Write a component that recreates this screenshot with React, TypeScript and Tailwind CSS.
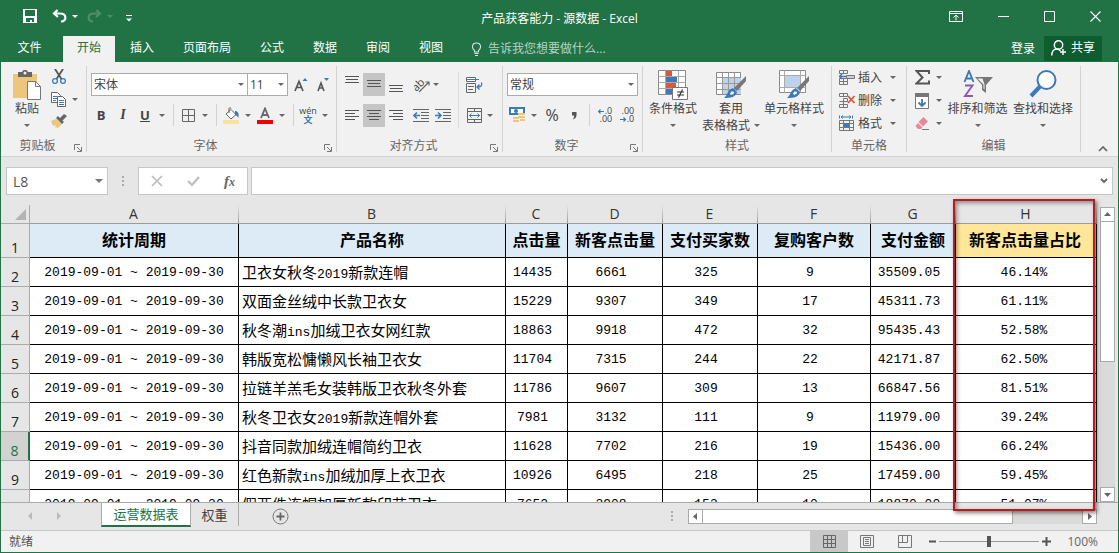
import type { ReactNode } from 'react'
import clsx from 'clsx'

const period = '2019-09-01 ~ 2019-09-30'

const rows = [
  [period, '卫衣女秋冬2019新款连帽', '14435', '6661', '325', '9', '35509.05', '46.14%'],
  [period, '双面金丝绒中长款卫衣女', '15229', '9307', '349', '17', '45311.73', '61.11%'],
  [period, '秋冬潮ins加绒卫衣女网红款', '18863', '9918', '472', '32', '95435.43', '52.58%'],
  [period, '韩版宽松慵懒风长袖卫衣女', '11704', '7315', '244', '22', '42171.87', '62.50%'],
  [period, '拉链羊羔毛女装韩版卫衣秋冬外套', '11786', '9607', '309', '13', '66847.56', '81.51%'],
  [period, '秋冬卫衣女2019新款连帽外套', '7981', '3132', '111', '9', '11979.00', '39.24%'],
  [period, '抖音同款加绒连帽简约卫衣', '11628', '7702', '216', '19', '15436.00', '66.24%'],
  [period, '红色新款ins加绒加厚上衣卫衣', '10926', '6495', '218', '25', '17459.00', '59.45%'],
  [period, '假两件连帽加厚新款印花卫衣', '7652', '3908', '153', '10', '18870.00', '51.07%'],
]

const headers = ['统计周期', '产品名称', '点击量', '新客点击量', '支付买家数', '复购客户数', '支付金额', '新客点击量占比']
const letters = ['A', 'B', 'C', 'D', 'E', 'F', 'G', 'H']
const tabs = ['文件', '开始', '插入', '页面布局', '公式', '数据', '审阅', '视图']

function Svg({ w, h, children, className }: { w: number; h: number; children: ReactNode; className?: string }) {
  return (
    <svg width={w} height={h} viewBox={`0 0 ${w} ${h}`} fill="none" className={clsx('shrink-0', className)} aria-hidden="true">
      {children}
    </svg>
  )
}

function Caret({ className = 'text-[#666]' }: { className?: string }) {
  return (
    <Svg w={6} h={3} className={className}>
      <path d="M0 0h6L3 3z" fill="currentColor" />
    </Svg>
  )
}

function CaretButton({ label }: { label: string }) {
  return (
    <button aria-label={label} className="flex w-[14px] items-center justify-center self-stretch">
      <Caret />
    </button>
  )
}

function Tool({ label, children, className = 'w-5' }: { label: string; children: ReactNode; className?: string }) {
  return (
    <button aria-label={label} className={clsx('flex shrink-0 items-center justify-center self-stretch', className)}>
      {children}
    </button>
  )
}

function Sep() {
  return <span className="mx-1 h-[22px] w-px shrink-0 bg-[#d2d2d2]" />
}

function Combo({ label, value, className }: { label: string; value: string; className?: string }) {
  return (
    <div className={clsx('relative h-[23px]', className)}>
      <select aria-label={label} className="h-full w-full appearance-none border border-[#ababab] bg-white pl-[2px] text-xs leading-[21px] text-[#444]">
        <option>{value}</option>
      </select>
      <span className="pointer-events-none absolute right-[4px] top-[10px]">
        <Caret />
      </span>
    </div>
  )
}

function Group({ title, width, launcher = true, children }: { title: string; width: string; launcher?: boolean; children: ReactNode }) {
  return (
    <section aria-label={title} className={clsx('flex h-[86px] shrink-0 flex-col border-r border-[#d2d2d2]', width)}>
      <div className="flex h-[73px]">{children}</div>
      <div className="flex h-[13px] items-center text-[#666]">
        <span className="flex-1 text-center">{title}</span>
        {launcher && (
          <button aria-label={`${title}设置`} className="mr-1 mt-1">
            <Svg w={8} h={8}>
              <path d="M.5 6V.5H6M3 3l4 4M7.5 3v4.500H3" stroke="#777" />
            </Svg>
          </button>
        )}
      </div>
    </section>
  )
}

function BigButton({ icon, lines, width }: { icon: ReactNode; lines: string[]; width: string }) {
  return (
    <button className={clsx('flex shrink-0 flex-col items-center pt-1', width)}>
      <span className="flex h-[32px] items-start">{icon}</span>
      <span className="h-4">{lines[0]}</span>
      <span className="flex h-[14px] items-center gap-1">
        {lines[1]}
        <Caret />
      </span>
    </button>
  )
}

function Lines({ widths, top, align = 'center' }: { widths: number[]; top: number; align?: 'left' | 'center' | 'right' }) {
  return (
    <Svg w={14} h={17}>
      {widths.map((w, i) => {
        const x = align === 'left' ? 0 : align === 'right' ? 14 - w : (14 - w) / 2
        return <rect key={i} x={x} y={top + i * 3} width={w} height="1" fill="#555" />
      })}
    </Svg>
  )
}

function Brush() {
  return (
    <>
      <path d="M30 6v5l-9 10-3-3z" fill="#777" />
      <path d="M17 18l4 4c-1 5-6 6-13 6 4-3 3-8 9-10z" fill="#3a7ab8" />
      <path d="M15 22c2-1 3 0 3 1-1 2-3 2-4 1z" fill="#fff" />
    </>
  )
}

function CellRow({ label, children }: { label: string; children: ReactNode }) {
  return (
    <button className="flex h-[23px] items-center pl-[7px]">
      <Svg w={16} h={17}>
        {children}
      </Svg>
      <span className="ml-[3px] mr-2">{label}</span>
      <Caret />
    </button>
  )
}

function TitleBar() {
  return (
    <div className="grid h-9 shrink-0 grid-cols-[1fr_auto_1fr] text-white">
      <div className="flex items-center pl-[22px] pb-1">
        <button aria-label="保存">
          <Svg w={14} h={14}>
            <path d="M0 0h14v14H0z" fill="#fff" />
            <path d="M2 1h10v6H2zM3 9h8v4H9v-2H7v2H3z" fill="#217346" />
          </Svg>
        </button>
        <button aria-label="撤消" className="ml-[15px]">
          <Svg w={15} h={14}>
            <path d="M5.500 1L2 4.500 6 8M2 4.500h6c7 0 7 8 1 8" stroke="#fff" strokeWidth="2.200" />
          </Svg>
        </button>
        <Caret className="ml-[5px] text-white" />
        <button aria-label="恢复" className="ml-[9px]">
          <Svg w={15} h={14}>
            <path d="M9.500 1L13 4.500 9 8M13 4.500H7c-7 0-7 8-1 8" stroke="#4d8f6b" strokeWidth="2.200" />
          </Svg>
        </button>
        <Caret className="ml-[5px] text-[#4d8f6b]" />
        <button aria-label="自定义快速访问工具栏" className="ml-[13px] mt-1">
          <Svg w={6} h={7}>
            <path d="M0 .5h6" stroke="#fff" />
            <path d="M0 3.500h6l-3 3z" fill="#fff" />
          </Svg>
        </button>
      </div>
      <h1 className="self-center pt-px text-xs">产品获客能力 - 源数据 - Excel</h1>
      <div className="flex items-center justify-end gap-[35px] pb-1 pr-[17px]">
        <button aria-label="功能区显示选项">
          <Svg w={14} h={11}>
            <path d="M.5.5h13v10H.5zM.5 2.500h13M7 9.500V4M4.500 6.500L7 4l2.500 2.500" stroke="#fff" />
          </Svg>
        </button>
        <button aria-label="最小化">
          <Svg w={11} h={11}>
            <path d="M0 5.500h11" stroke="#fff" />
          </Svg>
        </button>
        <button aria-label="最大化">
          <Svg w={11} h={11}>
            <path d="M.5.5h10v10H.5z" stroke="#fff" />
          </Svg>
        </button>
        <button aria-label="关闭">
          <Svg w={11} h={11}>
            <path d="M.5.500l10 10M10.500.5l-10 10" stroke="#fff" strokeWidth="1.100" />
          </Svg>
        </button>
      </div>
    </div>
  )
}

function RibbonTabs() {
  return (
    <div className="flex h-[26px] shrink-0 text-white">
      <nav className="flex gap-px">
        {tabs.map((tab, i) => (
          <button
            key={tab}
            className={clsx('h-full pb-[2px]', i === 0 ? 'w-[61px] pr-1' : 'px-[14px]', i === 1 && 'bg-[#f1f1f1] text-[#217346]')}
          >
            {tab}
          </button>
        ))}
      </nav>
      <label className="ml-[14px] flex flex-1 items-center gap-[6px]">
        <Svg w={11} h={14}>
          <path d="M3.500 10V8.500C.5 6.500.500 1 5.500 1s5 5.500 2 7.500V10zM3.500 11.500h4M4 13.500h3" stroke="#d5e7dc" strokeWidth="1.100" />
        </Svg>
        <input placeholder="告诉我您想要做什么..." className="h-5 w-40 bg-transparent leading-5 outline-none placeholder:text-[#b5d3c1]" />
      </label>
      <button className="px-[9px]">登录</button>
      <button className="mr-4 flex h-[25px] items-center gap-1 bg-[#0f5c2f] px-[7px] pb-px">
        <Svg w={16} h={16}>
          <circle cx="7.500" cy="5" r="4.200" stroke="#fff" strokeWidth="1.400" />
          <path d="M.8 15.500c0-4 2-6.500 5-6.500 2 0 3 1 3.500 2M12 9v6M9 12h6" stroke="#fff" strokeWidth="1.400" />
        </Svg>
        共享
      </button>
    </div>
  )
}

function Ribbon() {
  return (
    <div className="flex h-[95px] shrink-0 border-b border-[#d2d2d2] bg-[#f1f1f1] pt-1 leading-[13px]">
      <Group title="剪贴板" width="w-[86px]">
        <BigButton
          width="w-[50px] pl-[2px]"
          lines={['粘贴']}
          icon={
            <Svg w={28} h={30}>
              <path d="M0 4h24v24H0z" fill="#edc57b" />
              <path d="M5 2h4c1-3 5-3 6 0h4v5H5z" fill="#666" />
              <circle cx="12" cy="3" r="1.500" fill="#f1f1f1" />
              <path d="M14.500 11.500h8l5 5v13h-13z" fill="#fff" stroke="#777" />
              <path d="M22.500 11.500v5h5" stroke="#777" />
            </Svg>
          }
        />
        <div className="flex flex-col">
          <Tool label="剪切" className="h-[22px] w-4">
            <Svg w={14} h={16}>
              <path d="M3 0l6.500 10M11 0L4.500 10" stroke="#555" strokeWidth="1.800" />
              <circle cx="3" cy="12" r="2.400" stroke="#3a7ab8" strokeWidth="1.300" />
              <circle cx="11" cy="12" r="2.400" stroke="#3a7ab8" strokeWidth="1.300" />
            </Svg>
          </Tool>
          <div className="flex h-[22px] items-center">
            <Tool label="复制" className="w-4">
              <Svg w={16} h={15}>
                <path d="M.5.500h6l3 3v7h-9z" fill="#fff" stroke="#666" />
                <path d="M2 4.500h4M2 6.500h4M2 8.500h3" stroke="#3a7ab8" />
                <path d="M6.500 4.500h5l3 3v7h-8z" fill="#fff" stroke="#666" />
                <path d="M8 8.500h5M8 10.500h5M8 12.500h5" stroke="#3a7ab8" />
              </Svg>
            </Tool>
            <button aria-label="复制选项" className="ml-[5px]">
              <Caret />
            </button>
          </div>
          <Tool label="格式刷" className="h-[22px] w-4">
            <Svg w={16} h={14}>
              <path d="M0 7l5-2 6 5-4 4-3-1 1-2-3 1z" fill="#edc57b" />
              <path d="M5 4l2-2 6 6-2 2zM9 4l4-4 3 2-5 5z" fill="#666" />
            </Svg>
          </Tool>
        </div>
      </Group>

      <Group title="字体" width="w-[250px]">
        <div className="flex flex-col gap-2 pl-1 pt-[7px]">
          <div className="flex h-[23px]">
            <Combo label="字体" value="宋体" className="w-[157px]" />
            <Combo label="字号" value="11" className="-ml-px w-[41px]" />
            <Tool label="增大字号" className="ml-px w-6">
              <Svg w={14} h={16}>
                <path d="M1 14L5 4.500 9 14M2.500 10.500h5" stroke="#555" strokeWidth="1.700" />
                <path d="M8.500 4h5L11 1z" fill="#3a7ab8" />
              </Svg>
            </Tool>
            <Tool label="减小字号" className="w-5">
              <Svg w={12} h={16}>
                <path d="M1 14l3-8 3 8M2 11h4" stroke="#555" strokeWidth="1.600" />
                <path d="M7 1h5L9.500 4z" fill="#3a7ab8" />
              </Svg>
            </Tool>
          </div>
          <div className="flex h-[22px] items-center font-['Open_Sans','Noto_Sans_CJK_SC',sans-serif] text-[13px] text-[#444]">
            <Tool label="加粗">
              <b>B</b>
            </Tool>
            <Tool label="倾斜" className="w-6">
              <i className="font-['Liberation_Serif',serif] text-sm font-bold">I</i>
            </Tool>
            <Tool label="下划线">
              <b className="underline">U</b>
            </Tool>
            <CaretButton label="下划线选项" />
            <Sep />
            <Tool label="边框">
              <Svg w={13} h={13}>
                <path d="M.5.500h12v12H.5zM6.500.5v12M.5 6.500h12" stroke="#666" />
              </Svg>
            </Tool>
            <CaretButton label="边框选项" />
            <Sep />
            <Tool label="填充颜色">
              <Svg w={16} h={17}>
                <path d="M3 7l5-4.500 5 5-5 4.500z" fill="#fff" stroke="#666" />
                <path d="M6 6V1.500C6 .5 8 .5 8 1.500" stroke="#666" />
                <path d="M12 4c3 0 4 2 3.500 7-1-2-2-2.500-3.500-3z" fill="#3a7ab8" />
                <path d="M0 13h16v4H0z" fill="#fbe29b" />
              </Svg>
            </Tool>
            <CaretButton label="填充颜色选项" />
            <Tool label="字体颜色">
              <Svg w={16} h={17}>
                <path d="M4 11l4-9.500L12 11M5.500 8h5" stroke="#666" strokeWidth="1.800" />
                <path d="M0 13h16v4H0z" fill="#f00000" />
              </Svg>
            </Tool>
            <CaretButton label="字体颜色选项" />
            <Sep />
            <Tool label="拼音指南">
              <span className="flex flex-col items-center leading-[9px]">
                <span className="text-[9px]">wén</span>
                <span className="text-[9px] font-bold text-[#3a7ab8]">文</span>
              </span>
            </Tool>
            <CaretButton label="拼音选项" />
          </div>
        </div>
      </Group>

      <Group title="对齐方式" width="w-[166px]">
        <div className="flex flex-col gap-2 pl-1 pt-[7px]">
          <div className="flex h-[23px]">
            <Tool label="顶端对齐" className="w-[22px]"><Lines widths={[14, 12, 14]} top={0} /></Tool>
            <Tool label="垂直居中" className="w-[22px] bg-[#c5c5c5]"><Lines widths={[14, 12, 14]} top={4} /></Tool>
            <Tool label="底端对齐" className="w-[22px]"><Lines widths={[14, 12, 14]} top={9} /></Tool>
            <Tool label="方向" className="ml-1 w-[22px]">
              <Svg w={17} h={16}>
                <text x="-2" y="11" transform="rotate(-45 5 8)" fontSize="11" fontFamily="Open Sans" fill="#444">ab</text>
                <path d="M5 15L15 5M11.500 5H15v3.500" stroke="#666" strokeWidth="1.200" />
              </Svg>
            </Tool>
            <button aria-label="方向选项">
              <Caret />
            </button>
          </div>
          <div className="flex h-[23px]">
            <Tool label="左对齐" className="w-[22px]"><Lines widths={[14, 10, 14, 10]} top={3} align="left" /></Tool>
            <Tool label="居中" className="w-[22px] bg-[#c5c5c5]"><Lines widths={[14, 10, 14, 10]} top={3} /></Tool>
            <Tool label="右对齐" className="w-[22px]"><Lines widths={[14, 10, 14, 10]} top={3} align="right" /></Tool>
            <Tool label="减少缩进量" className="ml-[3px] w-[22px]">
              <Svg w={16} h={13}>
                <path d="M0 .5h16M8 3.500h8M8 6.500h8M8 9.500h8M0 12.500h16" stroke="#666" />
                <path d="M1 6.500h6M4 3.500l-3 3 3 3" stroke="#3a7ab8" strokeWidth="1.600" />
              </Svg>
            </Tool>
            <Tool label="增加缩进量" className="w-[22px]">
              <Svg w={16} h={13}>
                <path d="M0 .5h16M8 3.500h8M8 6.500h8M8 9.500h8M0 12.500h16" stroke="#666" />
                <path d="M0 6.500h6M3 3.500l3 3-3 3" stroke="#3a7ab8" strokeWidth="1.600" />
              </Svg>
            </Tool>
          </div>
        </div>
        <span className="ml-1 mt-[6px] h-[56px] w-px bg-[#dcdcdc]" />
        <div className="ml-1 flex flex-col gap-2 pt-[7px]">
          <Tool label="自动换行" className="h-[23px] w-[22px]">
            <Svg w={17} h={16}>
              <path d="M.5.500h9v4h-9z" fill="#fff" stroke="#666" />
              <path d="M0 2.500h13" stroke="#3a7ab8" />
              <path d="M.5 6.500h9v9h-9zM2 9.500h6M2 12.500h5" stroke="#666" />
              <path d="M15.500 5.500c1 4-1 4.500-4.500 4.500M13.500 7.500L11 10l2.500 2.500" stroke="#3a7ab8" strokeWidth="1.300" />
            </Svg>
          </Tool>
          <div className="flex h-[23px] items-center">
            <Tool label="合并后居中" className="w-[22px]">
              <Svg w={15} h={15}>
                <path d="M.5.500h14v14H.5zM.5 3.500h14M.5 11.500h14M7.500.5v3M7.500 11.500v3" stroke="#666" />
                <path d="M2 7.500h11M4.500 5.500l-2 2 2 2M10.500 5.500l2 2-2 2" stroke="#3a7ab8" />
              </Svg>
            </Tool>
            <button aria-label="合并选项" className="ml-[2px]">
              <Caret />
            </button>
          </div>
        </div>
      </Group>

      <Group title="数字" width="w-[140px]">
        <div className="flex flex-col gap-2 pl-1 pt-[7px]">
          <Combo label="数字格式" value="常规" className="w-[131px]" />
          <div className="flex h-[22px] items-center">
            <Tool label="会计数字格式">
              <Svg w={16} h={16}>
                <path d="M0 0h16v8H0z" fill="#3a7ab8" />
                <path d="M2 2h12v4H2z" fill="#fff" />
                <circle cx="7" cy="4" r="2" fill="#3a7ab8" />
                <path d="M9 6h7v2H9zM9 9h7v2H9zM4 10h6v2H4zM4 13h6v2H4zM11 12h5v2h-5z" fill="#edc57b" />
              </Svg>
            </Tool>
            <CaretButton label="会计格式选项" />
            <Tool label="百分比样式" className="w-[22px]">
              <span className="text-base text-[#444]">%</span>
            </Tool>
            <Tool label="千位分隔样式" className="w-[22px]">
              <Svg w={6} h={9}>
                <path d="M1 1h4.500v3.500Q5 8 1.500 8.500 3.500 7 3 4.500H1z" fill="#555" />
              </Svg>
            </Tool>
            <Sep />
            <Tool label="增加小数位数" className="w-[22px]">
              <span className="flex flex-col items-end text-[9px] leading-[8px] text-[#444]">
                <span className="flex items-center">
                  <Svg w={7} h={5}><path d="M0 2.500h6M2.500.500l-2 2 2 2" stroke="#3a7ab8" strokeWidth="1.200" /></Svg>.0
                </span>
                <span>.00</span>
              </span>
            </Tool>
            <Tool label="减少小数位数" className="w-[22px]">
              <span className="flex flex-col items-end text-[9px] leading-[8px] text-[#444]">
                <span>.00</span>
                <span className="flex items-center">
                  <Svg w={7} h={5}><path d="M0 2.500h6M3.500.500l2 2-2 2" stroke="#3a7ab8" strokeWidth="1.200" /></Svg>.0
                </span>
              </span>
            </Tool>
          </div>
        </div>
      </Group>

      <Group title="样式" width="w-[189px]" launcher={false}>
        <BigButton
          width="ml-[2px] w-14"
          lines={['条件格式']}
          icon={
            <Svg w={30} h={30}>
              <path d="M.5.500h27v24H.5z" fill="#fff" stroke="#8a8a8a" />
              <path d="M7.500.5v24M20.500.5v24M.5 6.500h27M.5 12.500h27M.5 18.500h27" stroke="#aaa" />
              <path d="M8 1h6v5H8zM8 13h10v5H8z" fill="#d9583b" />
              <path d="M8 7h11v5H8zM8 19h6v5H8z" fill="#3a7ab8" />
              <path d="M14.500 17.500h15v12h-15z" fill="#fff" stroke="#777" />
              <path d="M19 22h7M19 25h7M24.500 19.500l-4 8" stroke="#333" strokeWidth="1.200" />
            </Svg>
          }
        />
        <BigButton
          width="w-[60px]"
          lines={['套用', '表格格式']}
          icon={
            <Svg w={30} h={30}>
              <path d="M.5 2.500h24v22H.5z" fill="#fff" stroke="#8a8a8a" />
              <path d="M7 8h18v16H7z" fill="#bdd3ea" />
              <path d="M6.500 2.500v22M12.500 2.500v22M18.500 2.500v22M.5 7.500h24M.5 13.500h24M.5 19.500h24" stroke="#999" />
              <Brush />
            </Svg>
          }
        />
        <BigButton
          width="w-[66px]"
          lines={['单元格样式']}
          icon={
            <Svg w={30} h={30}>
              <path d="M.5.500h26v22H.5z" fill="#fff" stroke="#8a8a8a" />
              <path d="M5.500.5v22M21.500.5v22M.5 5.500h26M.5 17.500h26" stroke="#aaa" />
              <path d="M6 6h15v11H6z" fill="#bdd3ea" />
              <Brush />
            </Svg>
          }
        />
      </Group>

      <Group title="单元格" width="w-[75px]" launcher={false}>
        <div className="flex flex-col">
          <CellRow label="插入">
            <path d="M.5 1.500h8v3h-8zM4.500 1.500v3M.5 12.500h8v3h-8zM4.500 9.500v6M.5 9.500h8v3h-8z" stroke="#777" />
            <path d="M7.500 6.500h8v3h-8z" fill="#bdd3ea" stroke="#777" />
            <path d="M0 7.500h7M3 5l-2.500 2.500L3 10" stroke="#3a7ab8" strokeWidth="1.500" />
          </CellRow>
          <CellRow label="删除">
            <path d="M.5 1.500h8v3h-8zM4.500 1.500v3M4.500 6.500h4v3h-4zM.5 12.500h8v3h-8zM4.500 9.500v6M.5 9.500h8" stroke="#777" />
            <path d="M9 4l6.500 7M15.500 4L9 11" stroke="#d9583b" strokeWidth="1.800" />
          </CellRow>
          <CellRow label="格式">
            <path d="M.5.5v3M13.500.5v3M2 2h10M4 .5L2 2l2 1.500M10 .500L12 2l-2 1.500" stroke="#3a7ab8" />
            <path d="M.5 5.500h14v10H.5zM4.500 5.500v10M10.500 5.500v10M.5 8.500h14M.5 12.500h14" stroke="#777" />
            <path d="M5 8h5v4H5z" fill="#3a7ab8" />
          </CellRow>
        </div>
      </Group>

      <Group title="编辑" width="w-[174px]" launcher={false}>
        <div className="flex w-[38px] flex-col pl-2">
          <button aria-label="自动求和" className="flex h-[23px] items-center gap-[6px]">
            <Svg w={15} h={15}>
              <path d="M14 4V1H1.500l6 6.500-6 6H14v-3" stroke="#555" strokeWidth="2" />
            </Svg>
            <Caret />
          </button>
          <button aria-label="填充" className="flex h-[23px] items-center gap-[6px]">
            <Svg w={15} h={16}>
              <path d="M.5.500h13v15H.5z" fill="#fff" stroke="#777" />
              <path d="M0 0h14v4H0z" fill="#777" />
              <path d="M7 6v7M3.500 9.500L7 13l3.500-3.500" stroke="#3a7ab8" strokeWidth="1.800" />
            </Svg>
            <Caret />
          </button>
          <button aria-label="清除" className="flex h-[23px] items-center gap-[6px]">
            <Svg w={15} h={13}>
              <path d="M8.500 0L13 4.500 8 9.500 3.500 5z" fill="#e8899a" />
              <path d="M3 6l4.500 4.500L6 12H3L.5 9z" fill="#e8899a" />
              <path d="M7 12.500h7" stroke="#777" />
            </Svg>
            <Caret />
          </button>
        </div>
        <BigButton
          width="w-[65px]"
          lines={['排序和筛选']}
          icon={
            <Svg w={30} h={28}>
              <path d="M1.500 12L6 1l4.500 11M3 8.500h6" stroke="#3a7ab8" strokeWidth="1.900" />
              <path d="M2 15.500h7.500L2 26h8" stroke="#8e57b0" strokeWidth="1.900" />
              <path d="M12 7h18l-7 8v8l-4-3v-5z" fill="#777" />
              <path d="M14.500 8.500h5l2 6v5l-1-1v-4z" fill="#f1f1f1" />
            </Svg>
          }
        />
        <BigButton
          width="w-[66px]"
          lines={['查找和选择']}
          icon={
            <Svg w={28} h={28}>
              <circle cx="17.500" cy="10" r="9" fill="#fff" stroke="#3a7ab8" strokeWidth="2" />
              <path d="M11 16.500L2 26" stroke="#3a7ab8" strokeWidth="4" />
            </Svg>
          }
        />
      </Group>

      <div className="flex flex-1 items-end justify-end pb-1 pr-[10px]">
        <button aria-label="折叠功能区">
          <Svg w={10} h={6}>
            <path d="M1 5l4-4 4 4" stroke="#666" strokeWidth="1.700" />
          </Svg>
        </button>
      </div>
    </div>
  )
}

function FormulaBar() {
  return (
    <div className="flex h-12 shrink-0 items-start gap-[3px] pl-[5px] pr-[5px] pt-[10px]">
      <div className="relative h-7 w-[102px]">
        <input aria-label="名称框" defaultValue="L8" className="h-full w-full border border-[#c6c6c6] bg-white pl-[6px] text-sm text-[#555] outline-none" />
        <span className="pointer-events-none absolute right-[5px] top-3">
          <Svg w={8} h={4}>
            <path d="M0 0h8L4 4z" fill="#777" />
          </Svg>
        </span>
      </div>
      <span className="flex h-7 w-6 items-center justify-center">
        <Svg w={2} h={11}>
          <path d="M0 0h2v2H0zM0 4h2v2H0zM0 8h2v2H0z" fill="#aaa" />
        </Svg>
      </span>
      <div className="flex h-7 w-[110px] items-center justify-around border border-[#c6c6c6] bg-white">
        <button aria-label="取消">
          <Svg w={12} h={12}>
            <path d="M1 1l10 10M11 1L1 11" stroke="#bdbdbd" strokeWidth="1.700" />
          </Svg>
        </button>
        <button aria-label="输入">
          <Svg w={13} h={12}>
            <path d="M1 6l4 4 7-8" stroke="#bdbdbd" strokeWidth="2.200" />
          </Svg>
        </button>
        <button aria-label="插入函数" className="font-['Liberation_Serif',serif] text-[15px] font-bold italic leading-4 text-[#666]">
          f<span className="text-xs">x</span>
        </button>
      </div>
      <div className="flex h-7 flex-1 items-center border border-[#c6c6c6] bg-white pr-1">
        <input aria-label="编辑栏" className="h-full min-w-0 flex-1 px-1 outline-none" />
        <Svg w={8} h={6}>
          <path d="M1 1l3 3 3-3" stroke="#666" strokeWidth="1.800" />
        </Svg>
      </div>
    </div>
  )
}

// Latin runs inside Chinese text use the narrower monospace face
function MixedText({ text }: { text: string }) {
  return (
    <>
      {text.split(/([A-Za-z0-9]+)/).map((part, i) =>
        i % 2 ? <span key={i} className="font-['Liberation_Mono',monospace] text-[13px] leading-none">{part}</span> : part,
      )}
    </>
  )
}

function Sheet() {
  return (
    <table className="w-full table-fixed border-separate border-spacing-0 text-black">
      <colgroup>
        <col className="w-[29px]" />
        <col className="w-[209px]" />
        <col />
        <col className="w-[62px]" />
        <col className="w-[95px]" />
        <col className="w-[95px]" />
        <col className="w-[113px]" />
        <col className="w-[85px]" />
        <col className="w-[141px]" />
      </colgroup>
      <thead>
        <tr>
          <th className="border-b border-r border-[#ababab]">
            <Svg w={11} h={11} className="ml-auto mr-[3px]">
              <path d="M11 0v11H0z" fill="#b3b3b3" />
            </Svg>
          </th>
          {letters.map((letter) => (
            <th
              key={letter}
              className="h-[19px] border-b border-[#9b9b9b] bg-[linear-gradient(to_bottom,#e6e6e6,#9b9b9b)] bg-[length:1px_100%] bg-right bg-no-repeat pr-[2px] text-sm font-normal leading-[18px] text-[#333]"
            >
              {letter}
            </th>
          ))}
        </tr>
      </thead>
      <tbody>
        <tr>
          <RowHead n={1} />
          {headers.map((title, i) => (
            <th
              key={title}
              className={clsx(
                'h-[34px] whitespace-nowrap border-b border-r border-black text-base font-bold leading-[33px]',
                i === 7 ? 'bg-[#ffe699] pr-[2px]' : 'bg-[#ddebf7]',
              )}
            >
              {title}
            </th>
          ))}
        </tr>
        {rows.map((row, r) => (
          <tr key={r}>
            <RowHead n={r + 2} />
            {row.map((cell, c) => (
              <td
                key={c}
                className={clsx(
                  'h-[29px] whitespace-nowrap border-b border-r border-black bg-white',
                  c === 1
                    ? 'pl-[3px] text-[15px] leading-[28px]'
                    : "pt-[2px] text-center font-['Liberation_Mono',monospace] text-[13px] leading-[26px]",
                  c > 1 && c < 7 && 'pr-2',
                  c === 7 && 'pr-1',
                )}
              >
                {c === 1 ? <MixedText text={cell} /> : cell}
              </td>
            ))}
          </tr>
        ))}
      </tbody>
    </table>
  )
}

function RowHead({ n }: { n: number }) {
  return (
    <th
      className={clsx(
        'border-b border-r border-[#ababab] align-bottom text-sm font-normal leading-[18px]',
        n === 8 ? 'border-r-2 border-r-[#217346] bg-[#d2d2d2] text-[#217346]' : 'text-[#222]',
      )}
    >
      {n}
    </th>
  )
}

function ScrollButton({ label, d }: { label: string; d: string }) {
  return (
    <button aria-label={label} className="flex h-[15px] w-[15px] shrink-0 items-center justify-center border border-[#ababab] bg-white">
      <Svg w={7} h={7}>
        <path d={d} fill="#666" />
      </Svg>
    </button>
  )
}

function SheetTabs() {
  return (
    <div className="flex h-7 shrink-0 items-start border-t border-[#ababab] text-[13px]">
      <div className="flex w-[100px] items-center gap-[25px] pl-[27px] pt-[9px]">
        <button aria-label="上一个工作表">
          <Svg w={4} h={8}><path d="M4 0v8L0 4z" fill="#bbb" /></Svg>
        </button>
        <button aria-label="下一个工作表">
          <Svg w={4} h={8}><path d="M0 0v8l4-4z" fill="#bbb" /></Svg>
        </button>
      </div>
      <button className="h-6 w-[90px] border-b-2 border-l border-r border-[#ababab] border-b-[#217346] bg-white leading-[22px] text-[#217346]">
        运营数据表
      </button>
      <button className="h-[23px] w-12 border-r border-[#ababab] leading-[22px] text-[#444]">权重</button>
      <button aria-label="新工作表" className="ml-[33px] mt-[5px]">
        <Svg w={17} h={17}>
          <circle cx="8.500" cy="8.500" r="7.500" stroke="#777" />
          <path d="M8.500 4.500v8M4.500 8.500h8" stroke="#666" strokeWidth="1.800" />
        </Svg>
      </button>
      <span className="ml-auto mr-[15px] mt-2">
        <Svg w={2} h={11}>
          <path d="M0 0h2v2H0zM0 4h2v2H0zM0 8h2v2H0z" fill="#aaa" />
        </Svg>
      </span>
      <div className="mr-[21px] mt-[6px] flex w-[409px] bg-[#dadada]">
        <ScrollButton label="向左滚动" d="M5 0v7L1 3.500z" />
        <div className="-ml-px h-[15px] w-[311px] border border-[#ababab] bg-white" />
        <span className="flex-1" />
        <ScrollButton label="向右滚动" d="M2 0v7l4-3.500z" />
      </div>
    </div>
  )
}

function StatusBar() {
  return (
    <footer className="flex h-[22px] shrink-0 items-center border-t border-[#c6c6c6] bg-[#f1f1f1] text-[#555]">
      <span className="ml-2 flex-1">就绪</span>
      <button aria-label="普通" className="flex h-full w-[38px] items-center justify-center bg-[#c8c8c8]">
        <Svg w={13} h={13}>
          <path d="M.5.500h12v12H.5zM4.500.5v12M8.500.5v12M.5 4.500h12M.5 8.500h12" stroke="#666" />
        </Svg>
      </button>
      <button aria-label="页面布局视图" className="flex w-[38px] justify-center">
        <Svg w={14} h={13}>
          <path d="M.5.500h13v12H.5zM3.500 2.500h7v8h-7zM5 4.500h4M5 6.500h4M5 8.500h4" stroke="#777" />
        </Svg>
      </button>
      <button aria-label="分页预览" className="flex w-[38px] justify-center">
        <Svg w={14} h={13}>
          <path d="M.5.500h13v12H.5zM4.500.5v7M9.500.5v7M.5 7.500h9" stroke="#777" />
        </Svg>
      </button>
      <button aria-label="缩小" className="ml-[5px]">
        <Svg w={7} h={9}><path d="M0 4.500h7" stroke="#555" strokeWidth="2" /></Svg>
      </button>
      <input
        type="range"
        aria-label="显示比例"
        defaultValue={50}
        className="mx-[3px] h-3 w-[100px] appearance-none bg-[linear-gradient(#999,#999)] bg-[length:100%_1px] bg-center bg-no-repeat [&::-webkit-slider-thumb]:h-[11px] [&::-webkit-slider-thumb]:w-1 [&::-webkit-slider-thumb]:appearance-none [&::-webkit-slider-thumb]:bg-[#555]"
      />
      <button aria-label="放大">
        <Svg w={9} h={9}><path d="M0 4.500h9M4.500 0v9" stroke="#555" strokeWidth="2" /></Svg>
      </button>
      <span className="ml-4 mr-5 text-[#666]">100%</span>
    </footer>
  )
}

export default function App() {
  return (
    <div className="flex h-screen flex-col overflow-hidden border-x border-b border-[#217346] bg-[#e6e6e6] font-['Open_Sans','Noto_Sans_CJK_SC',sans-serif] text-xs text-[#444]">
      <header className="shrink-0 bg-[#217346]">
        <TitleBar />
        <RibbonTabs />
      </header>
      <Ribbon />
      <FormulaBar />
      <main className="relative min-h-0 flex-1">
        <div className="flex h-full overflow-hidden">
          <div className="min-w-0 flex-1">
            <Sheet />
          </div>
          <div className="mx-[3px] mt-[2px] flex w-[15px] flex-col bg-[#dadada]">
            <ScrollButton label="向上滚动" d="M0 5h7L3.500 1z" />
            <div className="h-[140px] border border-t-0 border-[#ababab] bg-white" />
            <span className="flex-1" />
            <ScrollButton label="向下滚动" d="M0 2h7L3.500 6z" />
          </div>
        </div>
        {/* callout around column H */}
        <div className="pointer-events-none absolute -bottom-[9px] -top-[6px] right-[23px] z-10 w-[142px] border-2 border-[#b81c1c] shadow-[2px_2px_4px_rgba(0,0,0,0.5),inset_2px_2px_4px_rgba(0,0,0,0.4)]" />
      </main>
      <SheetTabs />
      <StatusBar />
    </div>
  )
}
